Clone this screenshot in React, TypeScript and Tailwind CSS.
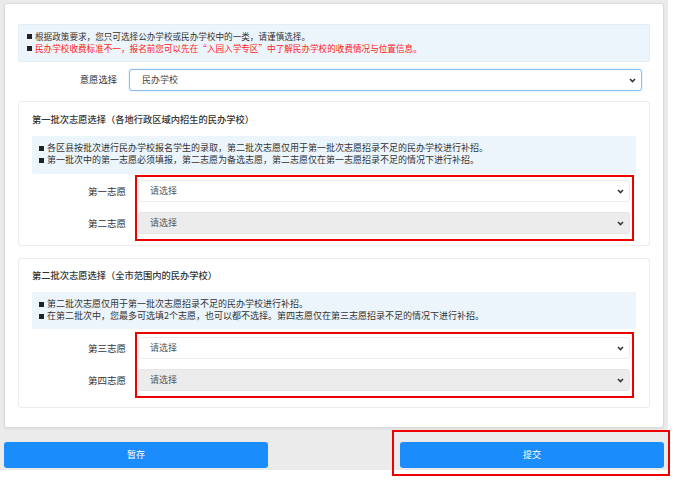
import React from "react";

const font = { fontFamily: '"Noto Sans CJK SC", "Noto Sans", sans-serif' };

function Chevron() {
  return (
    <svg width="7" height="5" viewBox="0 0 7 5" className="shrink-0">
      <path d="M1 1 L3.5 3.6 L6 1" fill="none" stroke="#333" strokeWidth="1.5" />
    </svg>
  );
}

function Select({ text, gray, focus }: { text: string; gray?: boolean; focus?: boolean }) {
  return (
    <div
      className={
        "flex items-center justify-between rounded-[3px] border text-[9px] " +
        (focus
          ? "h-[22px] border-[#8cc0f0] bg-white pl-[12px] pr-[5px] text-[#444] shadow-[0_0_2px_rgba(100,170,240,0.4)]"
          : gray
          ? "h-[22px] border-[#e6e6e6] bg-[#ececec] pl-[11px] pr-[5px] text-[9.3px] text-[#555]"
          : "h-[22px] border-[#ececec] bg-white pl-[11px] pr-[5px] text-[9.3px] text-[#555]")
      }
    >
      <span>{text}</span>
      <Chevron />
    </div>
  );
}

function Row({ label, gray, mt }: { label: string; gray?: boolean; mt: string }) {
  return (
    <div className={"flex items-center " + mt}>
      <div className="w-[106px] pr-[12px] text-right text-[9.5px] text-[#333]">{label}</div>
      <div className="flex-1 pr-[6px]">
        <Select text="请选择" gray={gray} />
      </div>
    </div>
  );
}

function Bullet({ children, red, size }: { children: React.ReactNode; red?: boolean; size: string }) {
  return (
    <div className={"flex items-center h-[12px] leading-[12px] " + size}>
      <span className="mr-[3px] inline-block h-[5px] w-[5px] bg-[#222]" />
      <span className={red ? "text-[#ff2020]" : "text-[#333]"}>{children}</span>
    </div>
  );
}

export default function App() {
  return (
    <div className="relative h-[485px] w-[674px] bg-white" style={font}>
      <div className="h-[470px] w-[668px] bg-[#ebebeb] pl-[4px] pr-[4px] pt-[3px]">
        <div className="h-[425px] rounded-[3px] border border-[#dcdcdc] bg-white px-[13px] pt-[20px] shadow-[0_1px_2px_rgba(0,0,0,0.08)]">
          <div className="h-[38px] rounded-[2px] border border-[#e3edf7] bg-[#edf5fc] pl-[8px] pt-[5px]">
            <Bullet size="text-[8.6px]">根据政策要求，您只可选择公办学校或民办学校中的一类，请谨慎选择。</Bullet>
            <Bullet size="text-[8.6px]" red>民办学校收费标准不一，报名前您可以先在“入园入学专区”中了解民办学校的收费情况与位置信息。</Bullet>
          </div>
          <div className="mt-[7px] flex items-center pr-[8px]">
            <div className="w-[111px] pr-[12px] text-right text-[9.3px] text-[#333]">意愿选择</div>
            <div className="flex-1">
              <Select text="民办学校" focus />
            </div>
          </div>

          <div className="relative mt-[10px] h-[145px] rounded-[3px] border border-[#ececec] px-[13px] pt-[10px]">
            <div className="h-[14px] text-[9.25px] font-medium leading-[14px] text-[#333]">第一批次志愿选择（各地行政区域内招生的民办学校）</div>
            <div className="mt-[10px] h-[38px] rounded-[2px] bg-[#edf5fc] pl-[7px] pt-[6px]">
              <Bullet size="text-[9px]">各区县按批次进行民办学校报名学生的录取，第二批次志愿仅用于第一批次志愿招录不足的民办学校进行补招。</Bullet>
              <Bullet size="text-[9px]">第一批次中的第一志愿必须填报，第二志愿为备选志愿，第二志愿仅在第一志愿招录不足的情况下进行补招。</Bullet>
            </div>
            <Row label="第一志愿" mt="mt-[6px]" />
            <Row label="第二志愿" gray mt="mt-[10px]" />
            <div className="absolute left-[116px] top-[73px] h-[66px] w-[499px] border-2 border-[#ee0000]" />
          </div>

          <div className="relative mt-[12px] h-[150px] rounded-[3px] border border-[#ececec] px-[13px] pt-[9px]">
            <div className="h-[14px] text-[9.25px] font-medium leading-[14px] text-[#333]">第二批次志愿选择（全市范围内的民办学校）</div>
            <div className="mt-[10px] h-[37px] rounded-[2px] bg-[#edf5fc] pl-[7px] pt-[6px]">
              <Bullet size="text-[9px]">第二批次志愿仅用于第一批次志愿招录不足的民办学校进行补招。</Bullet>
              <Bullet size="text-[9px]">在第二批次中，您最多可选填2个志愿，也可以都不选择。第四志愿仅在第三志愿招录不足的情况下进行补招。</Bullet>
            </div>
            <Row label="第三志愿" mt="mt-[8px]" />
            <Row label="第四志愿" gray mt="mt-[10px]" />
            <div className="absolute left-[116px] top-[73px] h-[66px] w-[499px] border-2 border-[#ee0000]" />
          </div>
        </div>
        <div className="mt-[14px] flex justify-between">
          <div className="flex h-[26px] w-[264px] items-center justify-center rounded-[3px] bg-[#1a8cfc] text-[9px] text-white">暂存</div>
          <div className="flex h-[26px] w-[264px] items-center justify-center rounded-[3px] bg-[#1a8cfc] text-[9px] text-white">提交</div>
        </div>
      </div>
      <div className="absolute left-[392px] top-[430px] h-[46px] w-[278px] border-2 border-[#ee0000]" />
    </div>
  );
}
